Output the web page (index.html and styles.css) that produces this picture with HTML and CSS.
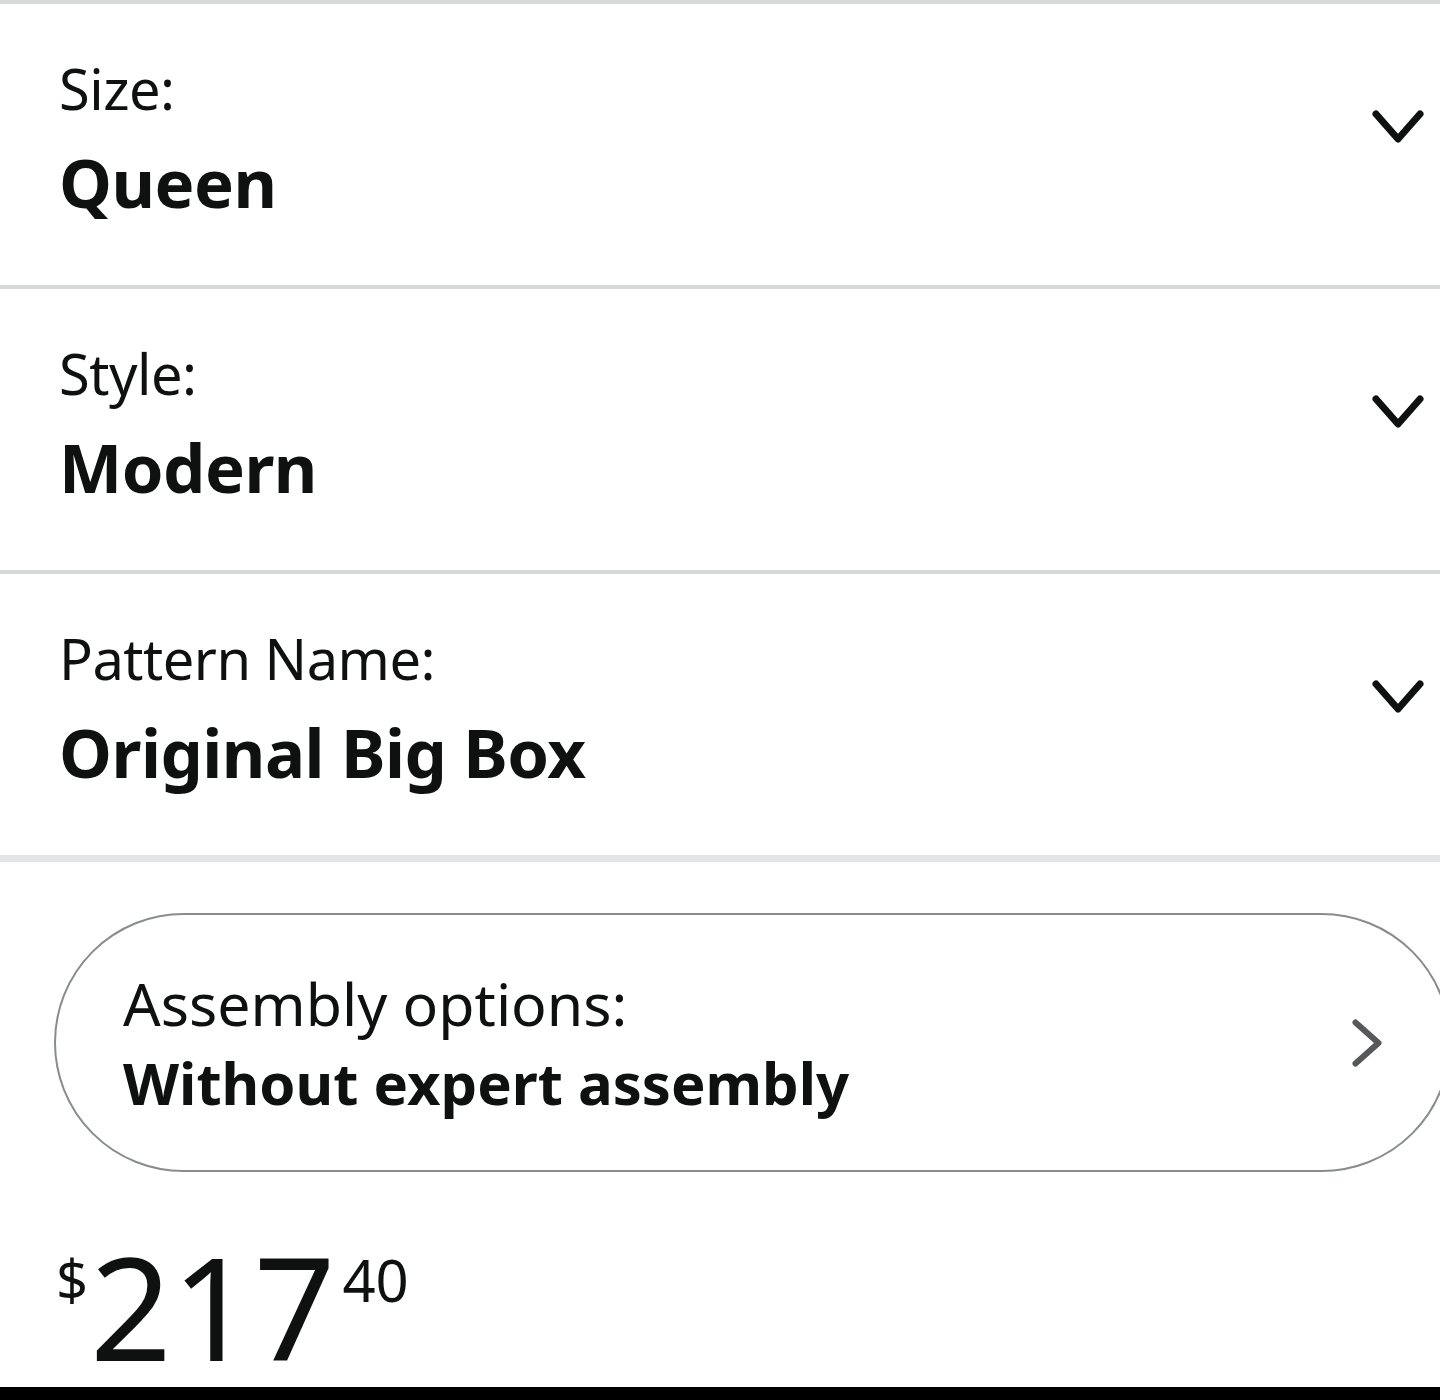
FILE: index.html
```html
<!DOCTYPE html>
<html lang="en">
<head>
<meta charset="utf-8">
<title>Product options</title>
<link rel="stylesheet" href="styles.css">
</head>
<body>
<div class="page">
  <main class="options">
    <section class="variation">
      <div class="variation-text">
        <div class="variation-label">Size:</div>
        <div class="variation-value">Queen</div>
      </div>
      <svg class="chevron-down" viewBox="0 0 52 34" aria-hidden="true"><polyline points="4,4 26,29 48,4"/></svg>
    </section>
    <section class="variation">
      <div class="variation-text">
        <div class="variation-label">Style:</div>
        <div class="variation-value">Modern</div>
      </div>
      <svg class="chevron-down" viewBox="0 0 52 34" aria-hidden="true"><polyline points="4,4 26,29 48,4"/></svg>
    </section>
    <section class="variation variation-last">
      <div class="variation-text">
        <div class="variation-label">Pattern Name:</div>
        <div class="variation-value">Original Big Box</div>
      </div>
      <svg class="chevron-down" viewBox="0 0 52 34" aria-hidden="true"><polyline points="4,4 26,29 48,4"/></svg>
    </section>

    <div class="assembly-wrap">
      <button class="assembly" type="button">
        <span class="assembly-text">
          <span class="assembly-label">Assembly options:</span>
          <span class="assembly-value">Without expert assembly</span>
        </span>
        <svg class="chevron-right" viewBox="0 0 30 48" aria-hidden="true"><polyline points="3.5,3.5 26.5,24 3.5,44.5"/></svg>
      </button>
    </div>

    <div class="price">
      <span class="price-symbol">$</span><span class="price-whole">217</span><span class="price-fraction">40</span>
    </div>
  </main>
  <div class="bottom-bar"></div>
</div>
</body>
</html>
```

FILE: styles.css
```css
* {
  box-sizing: border-box;
}

html,
body {
  margin: 0;
  padding: 0;
  background: #ffffff;
}

body {
  font-family: "Noto Sans", "Open Sans", sans-serif;
  color: #0f1111;
}

.page {
  display: flex;
  flex-direction: column;
  height: 1400px;
  overflow: hidden;
  border-top: 4px solid #d5d9d9;
}

.options {
  flex: 1;
  display: flex;
  flex-direction: column;
}

/* dropdown rows */
.variation {
  display: flex;
  justify-content: space-between;
  align-items: flex-start;
  padding: 48px 16px 58px 59px;
  border-bottom: 4px solid #d5d9d9;
}

.variation-last {
  border-bottom: 7px solid #e3e6e6;
}

.variation-label {
  font-size: 56px;
  line-height: 72px;
  font-weight: 400;
  letter-spacing: -0.5px;
}

.variation-value {
  margin-top: 13px;
  font-size: 67px;
  line-height: 90px;
  font-weight: 700;
  letter-spacing: -0.5px;
}

.chevron-down {
  width: 52px;
  height: 34px;
  margin-top: 58px;
  fill: none;
  stroke: #0f1111;
  stroke-width: 7;
  stroke-linecap: round;
  stroke-linejoin: round;
}

/* assembly pill */
.assembly-wrap {
  padding: 51px 0 0 54px;
}

.assembly {
  display: flex;
  align-items: center;
  justify-content: space-between;
  width: 1397px;
  height: 259px;
  padding: 0 67px 0 67px;
  border: 2px solid #888c8c;
  border-radius: 130px;
  background: #ffffff;
  font-family: inherit;
  color: inherit;
  text-align: left;
  cursor: pointer;
}

.assembly-text {
  display: flex;
  flex-direction: column;
}

.assembly-label {
  font-size: 59px;
  line-height: 80px;
  font-weight: 400;
}

.assembly-value {
  font-size: 58px;
  line-height: 80px;
  font-weight: 700;
}

.chevron-right {
  width: 30px;
  height: 48px;
  fill: none;
  stroke: #565959;
  stroke-width: 6;
  stroke-linecap: round;
  stroke-linejoin: round;
}

/* price */
.price {
  display: flex;
  align-items: flex-start;
  margin-top: 62px;
  padding-left: 56px;
}

.price-symbol {
  font-size: 56px;
  line-height: 1;
  margin-top: 17px;
  margin-right: 2px;
}

.price-whole {
  font-size: 143px;
  line-height: 1;
}

.price-fraction {
  font-size: 58px;
  line-height: 1;
  margin-top: 17px;
  margin-left: 7px;
}

.bottom-bar {
  height: 13px;
  background: #000000;
  flex: none;
}
```
